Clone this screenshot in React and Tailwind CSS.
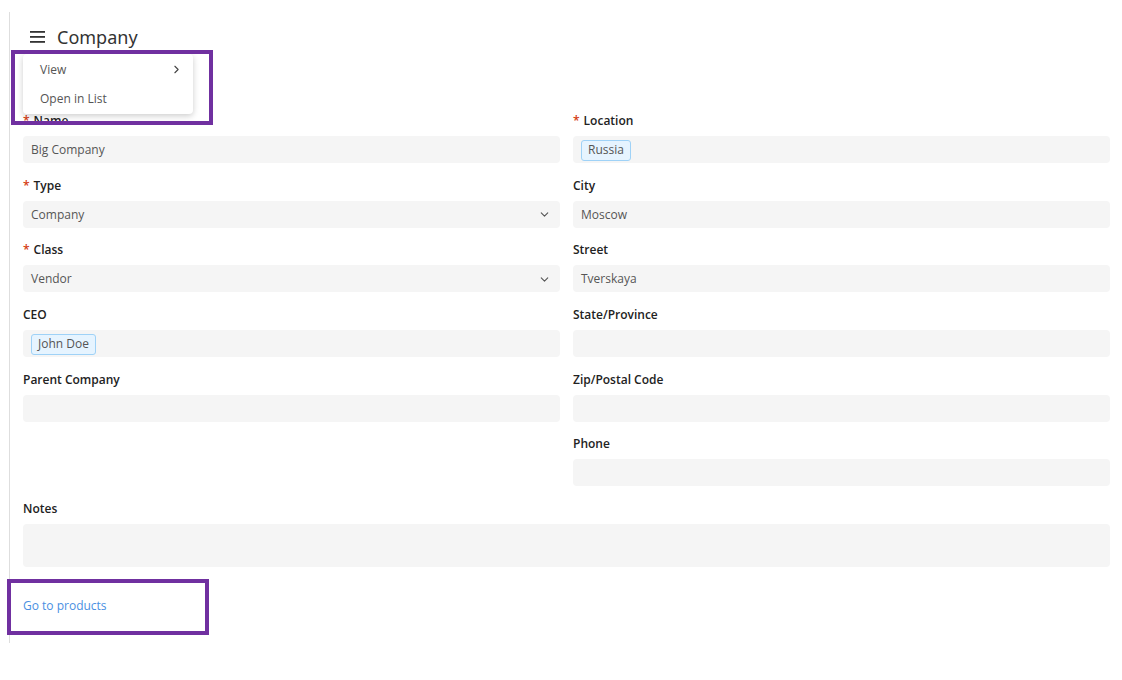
import React from "react";
import { ChevronDown, ChevronRight } from "lucide-react";

const font = { fontFamily: '"Open Sans", "Noto Sans", sans-serif' };

function Label({ children, required }) {
  return (
    <div className="flex h-[18px] items-center text-[12px] font-semibold leading-[18px] text-[#222]">
      {required && <span className="mr-[4px] text-[#d4380d]">*</span>}
      {children}
    </div>
  );
}

function Box({ children, select }) {
  return (
    <div className="mt-[6px] flex h-[27px] items-center rounded-[4px] bg-[#f5f5f5] px-[8px] pt-[1px] text-[12px] text-[#555]">
      <div className="flex-1">{children}</div>
      {select && <ChevronDown size={13} strokeWidth={2} className="mr-[1px] text-[#555]" />}
    </div>
  );
}

function Chip({ children }) {
  return (
    <span className="inline-flex h-[21px] items-center rounded-[3px] border border-[#9fd2f7] bg-[#e6f4ff] px-[6px] text-[12px] text-[#555]">
      {children}
    </span>
  );
}

function Field({ label, required, children, select }) {
  return (
    <div className="flex flex-col">
      <Label required={required}>{label}</Label>
      <Box select={select}>{children}</Box>
    </div>
  );
}

export default function App() {
  return (
    <div className="relative h-[680px] w-[1122px] bg-white" style={font}>
      <div className="pl-[9px] pt-[12px]">
        <div className="h-[631px] border-l border-[#dedede] pl-[13px] pr-[12px]">
          <div className="flex h-[50px] items-center">
            <svg width="15" height="12" viewBox="0 0 15 12" className="ml-[7px]">
              <rect x="0" y="0" width="15" height="1.8" fill="#333" />
              <rect x="0" y="5" width="15" height="1.8" fill="#333" />
              <rect x="0" y="10" width="15" height="1.8" fill="#333" />
            </svg>
            <span className="ml-[12px] text-[18px] leading-[26px] text-[#333]" style={{ fontFamily: '"Noto Sans", sans-serif' }}>
              Company
            </span>
          </div>
          <div className="h-[50px]" />
          <div className="grid grid-cols-2 gap-x-[13px] gap-y-[13.7px]">
            <Field label="Name" required>Big Company</Field>
            <Field label="Location" required><Chip>Russia</Chip></Field>
            <Field label="Type" required select>Company</Field>
            <Field label="City">Moscow</Field>
            <Field label="Class" required select>Vendor</Field>
            <Field label="Street">Tverskaya</Field>
            <Field label="CEO"><Chip>John Doe</Chip></Field>
            <Field label="State/Province" />
            <Field label="Parent Company" />
            <Field label="Zip/Postal Code" />
            <div />
            <Field label="Phone" />
            <div className="col-span-2 flex flex-col">
              <Label>Notes</Label>
              <div className="mt-[6px] h-[43px] rounded-[4px] bg-[#f5f5f5]" />
            </div>
          </div>
          <div className="mt-[30px] text-[12px] leading-[18px] text-[#4a90e2]">Go to products</div>
        </div>
      </div>

      {/* dropdown menu */}
      <div className="absolute left-[23px] top-[54px] w-[170px] rounded-[4px] bg-white py-[1px] text-[12px] text-[#555] shadow-[0_2px_6px_rgba(0,0,0,0.2)]">
        <div className="flex h-[29px] items-center justify-between pl-[17px] pr-[10px]">
          <span>View</span>
          <ChevronRight size={13} strokeWidth={2} className="text-[#444]" />
        </div>
        <div className="flex h-[29px] items-center pl-[17px]">Open in List</div>
      </div>

      {/* annotation boxes */}
      <div className="absolute left-[11px] top-[50px] h-[75px] w-[202px] border-[4px] border-[#7030a0]" />
      <div className="absolute left-[7px] top-[579px] h-[56px] w-[202px] border-[4px] border-[#7030a0]" />
    </div>
  );
}
